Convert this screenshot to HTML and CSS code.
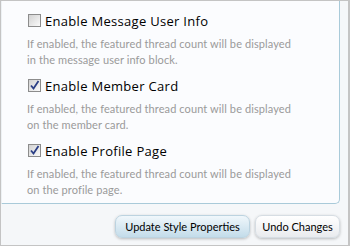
FILE: index.html
```html
<!DOCTYPE html>
<html lang="en">
<head>
  <meta charset="UTF-8">
  <title>Style Properties</title>
  <link rel="stylesheet" href="styles.css">
</head>
<body>
  <form class="frame">
    <div class="panel">
      <div class="option">
        <label class="option-label">
          <span class="box"></span>
          Enable Message User Info
        </label>
        <p class="explain">If enabled, the featured thread count will be displayed in the message user info block.</p>
      </div>
      <div class="option">
        <label class="option-label">
          <span class="box">
            <svg width="11" height="11" viewBox="0 0 11 11"><path d="M2 5.5 L4.5 8.5 L9.5 1" fill="none" stroke="#2b3f86" stroke-width="1.8"/></svg>
          </span>
          Enable Member Card
        </label>
        <p class="explain">If enabled, the featured thread count will be displayed on the member card.</p>
      </div>
      <div class="option">
        <label class="option-label">
          <span class="box">
            <svg width="11" height="11" viewBox="0 0 11 11"><path d="M2 5.5 L4.5 8.5 L9.5 1" fill="none" stroke="#2b3f86" stroke-width="1.8"/></svg>
          </span>
          Enable Profile Page
        </label>
        <p class="explain">If enabled, the featured thread count will be displayed on the profile page.</p>
      </div>
    </div>
    <div class="submit-row">
      <button type="button" class="button primary">Update Style Properties</button>
      <button type="button" class="button undo">Undo Changes</button>
    </div>
  </form>
</body>
</html>
```
FILE: styles.css
```css
body {
  margin: 0;
  font-family: Lato, "Open Sans", sans-serif;
  background: #fff;
}

.frame {
  width: 350px;
  height: 246px;
  box-sizing: border-box;
  border: 1px solid #c4c4c4;
  border-right-width: 2px;
  background: #f5f7f9;
  margin: 0;
}

.panel {
  margin-right: 8px;
  height: 203px;
  box-sizing: border-box;
  padding: 11px 0 0 26px;
  background: #fbfcfe;
  border-right: 1px solid #a9cad9;
  border-bottom: 1px solid #a9cad9;
  border-left: 1px solid #edf1f4;
  border-bottom-right-radius: 5px;
}

.option {
  height: 65px;
}

.option-label {
  display: flex;
  align-items: center;
  height: 17px;
  font-family: "Open Sans", sans-serif;
  font-size: 13px;
  letter-spacing: 0.3px;
  color: #000;
}

.box {
  width: 11px;
  height: 11px;
  margin-right: 4px;
  border: 1px solid #8c8c8c;
  background: linear-gradient(135deg, #d2d2d2, #fafafa);
  display: flex;
  align-items: center;
  justify-content: center;
}

.explain {
  margin: 7px 0 0 -1px;
  width: 274px;
  font-size: 11px;
  line-height: 16px;
  letter-spacing: 0.1px;
  color: #9a9a9a;
}

.submit-row {
  display: flex;
  justify-content: flex-end;
  gap: 5px;
  margin: 11px 8px 0 0;
}

.button {
  font-family: Lato, "Open Sans", sans-serif;
  font-size: 11px;
  color: #000;
  height: 23px;
  padding: 0;
  border: 1px solid #d6dde3;
  border-radius: 7px;
  background: linear-gradient(#ffffff, #e9ebee);
  box-shadow: 0 1px 3px rgba(0, 0, 0, 0.25);
}

.button.primary {
  width: 135px;
  border-color: #bcd3e0;
  background: linear-gradient(#f0f7fb, #c3dcea);
}

.button.undo {
  width: 85px;
}
```
